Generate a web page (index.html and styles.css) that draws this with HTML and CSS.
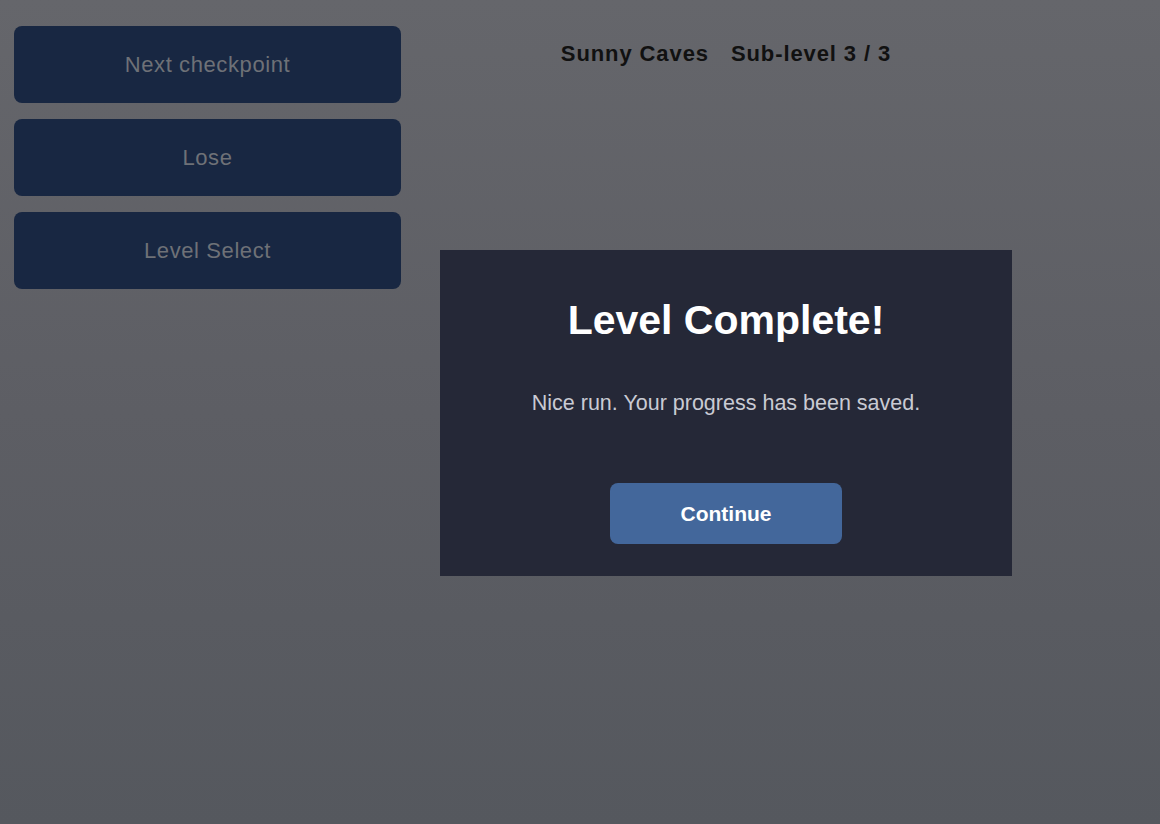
FILE: index.html
```html
<!DOCTYPE html>
<html lang="en">
<head>
    <meta charset="UTF-8">
    <title>Sunny Caves</title>
    <link rel="stylesheet" href="styles.css">
</head>
<body>
    <div class="game">
        <div class="side-menu">
            <button class="menu-btn">Next checkpoint</button>
            <button class="menu-btn">Lose</button>
            <button class="menu-btn">Level Select</button>
        </div>
        <div class="stage">
            <div class="hud">
                <span>Sunny Caves</span>
                <span>Sub-level 3 / 3</span>
            </div>
            <div class="result-panel">
                <h1>Level Complete!</h1>
                <p>Nice run. Your progress has been saved.</p>
                <button class="continue-btn">Continue</button>
            </div>
        </div>
    </div>
</body>
</html>
```

FILE: styles.css
```css
html, body {
    height: 100%;
}
body {
    margin: 0;
    font-family: 'Liberation Sans', Arial, sans-serif;
    background: linear-gradient(to bottom, #65666b 0%, #5d5e64 50%, #55585e 100%);
}
.game {
    display: flex;
    align-items: flex-start;
    padding: 26px 14px;
    box-sizing: border-box;
    min-height: 100%;
}
.side-menu {
    display: flex;
    flex-direction: column;
    gap: 16px;
    width: 387px;
    flex-shrink: 0;
}
.menu-btn {
    height: 77px;
    background-color: #182742;
    color: #6e7177;
    border: none;
    border-radius: 8px;
    font-family: inherit;
    font-size: 22px;
    letter-spacing: 0.6px;
}
.stage {
    width: 572px;
    margin-left: 39px;
    display: flex;
    flex-direction: column;
    align-items: center;
}
.hud {
    display: flex;
    gap: 22px;
    margin-top: 15px;
    font-size: 22px;
    font-weight: bold;
    letter-spacing: 0.9px;
    color: #111;
}
.result-panel {
    margin-top: 183px;
    width: 100%;
    height: 326px;
    box-sizing: border-box;
    background-color: #252837;
    display: flex;
    flex-direction: column;
    align-items: center;
    padding-top: 47px;
}
.result-panel h1 {
    margin: 0;
    font-size: 41px;
    color: #fff;
}
.result-panel p {
    margin: 47px 0 0;
    font-size: 21.5px;
    color: #c9cbd3;
}
.continue-btn {
    margin-top: 67px;
    width: 232px;
    height: 61px;
    background-color: #43679b;
    color: #fff;
    border: none;
    border-radius: 8px;
    font-family: inherit;
    font-size: 21px;
    font-weight: bold;
}
```
